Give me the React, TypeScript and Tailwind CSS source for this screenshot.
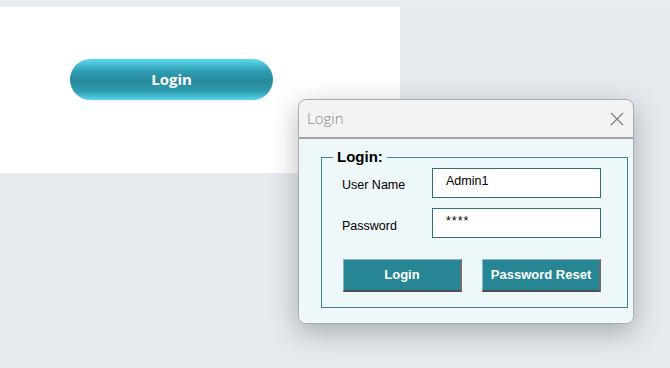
import React from 'react';

const btn =
  'h-[33px] bg-[#268696] border-t border-l border-[#8fb7bf] border-r-2 border-b-2 border-r-[#6f6f6f] border-b-[#4f4f4f] text-white font-bold text-[13px]';

const LoginDialog = () => (
  <div className="absolute left-[298px] top-[99px] w-[336px] h-[225px] rounded-[8px] border border-[#a9acb0] bg-[#f3f3f3] shadow-[0_8px_28px_rgba(0,0,0,0.28)] overflow-hidden flex flex-col">
    <div className="h-[39px] flex items-center justify-between pl-[8px] pr-[6px] border-b-2 border-[#a3a3a3]">
      <span className="text-[15px] text-[#8a8a8a] font-['Open_Sans',sans-serif] font-light">Login</span>
      <svg width="16" height="16" viewBox="0 0 16 16" className="mr-[2px]">
        <path d="M2 2L14 14M14 2L2 14" stroke="#7a7a7a" strokeWidth="1.1" />
      </svg>
    </div>
    <div className="flex-1 bg-[#eef7fa] pl-[22px] pr-[4px] pt-[10px] font-['Liberation_Sans',sans-serif]">
      <fieldset className="w-[307px] h-[159px] border border-[#3b8591] p-0">
        <legend className="ml-[11px] px-[4px] text-[15px] font-bold text-black leading-[16px]">Login:</legend>
        <div className="pl-[20px] pr-[26px]">
          <div className="grid grid-cols-[90px_1fr] gap-y-[10px] items-center text-[12.5px] text-black mt-[3px]">
            <span className="pt-[4px]">User Name</span>
            <div className="h-[30px] bg-white border border-[#2e6f7b] pl-[13px] pt-[3px]">Admin1</div>
            <span className="pt-[6px]">Password</span>
            <div className="h-[30px] bg-white border border-[#2e6f7b] pl-[13px] pt-[3px] tracking-[1px]">****</div>
          </div>
          <div className="flex justify-between mt-[21px] pl-[1px]">
            <button className={`w-[119px] ${btn}`}>Login</button>
            <button className={`w-[119px] ${btn}`}>Password Reset</button>
          </div>
        </div>
      </fieldset>
    </div>
  </div>
);

export default function App() {
  return (
    <div className="relative w-[670px] h-[368px] bg-[#e6eaef] overflow-hidden">
      <div className="h-[7px] bg-[#e9edf1]" />
      <div className="w-[400px] h-[166px] bg-white flex items-start pt-[52px] pl-[70px]">
        <button className="w-[203px] h-[41px] rounded-full bg-[linear-gradient(to_bottom,#5cd9ee_0%,#2e9db2_30%,#27889a_55%,#2f9fb4_80%,#5ad6ec_100%)] text-white font-bold text-[15px] font-['Open_Sans',sans-serif] shadow-[0_1px_2px_rgba(0,0,0,0.08)]">
          Login
        </button>
      </div>
      <LoginDialog />
    </div>
  );
}
